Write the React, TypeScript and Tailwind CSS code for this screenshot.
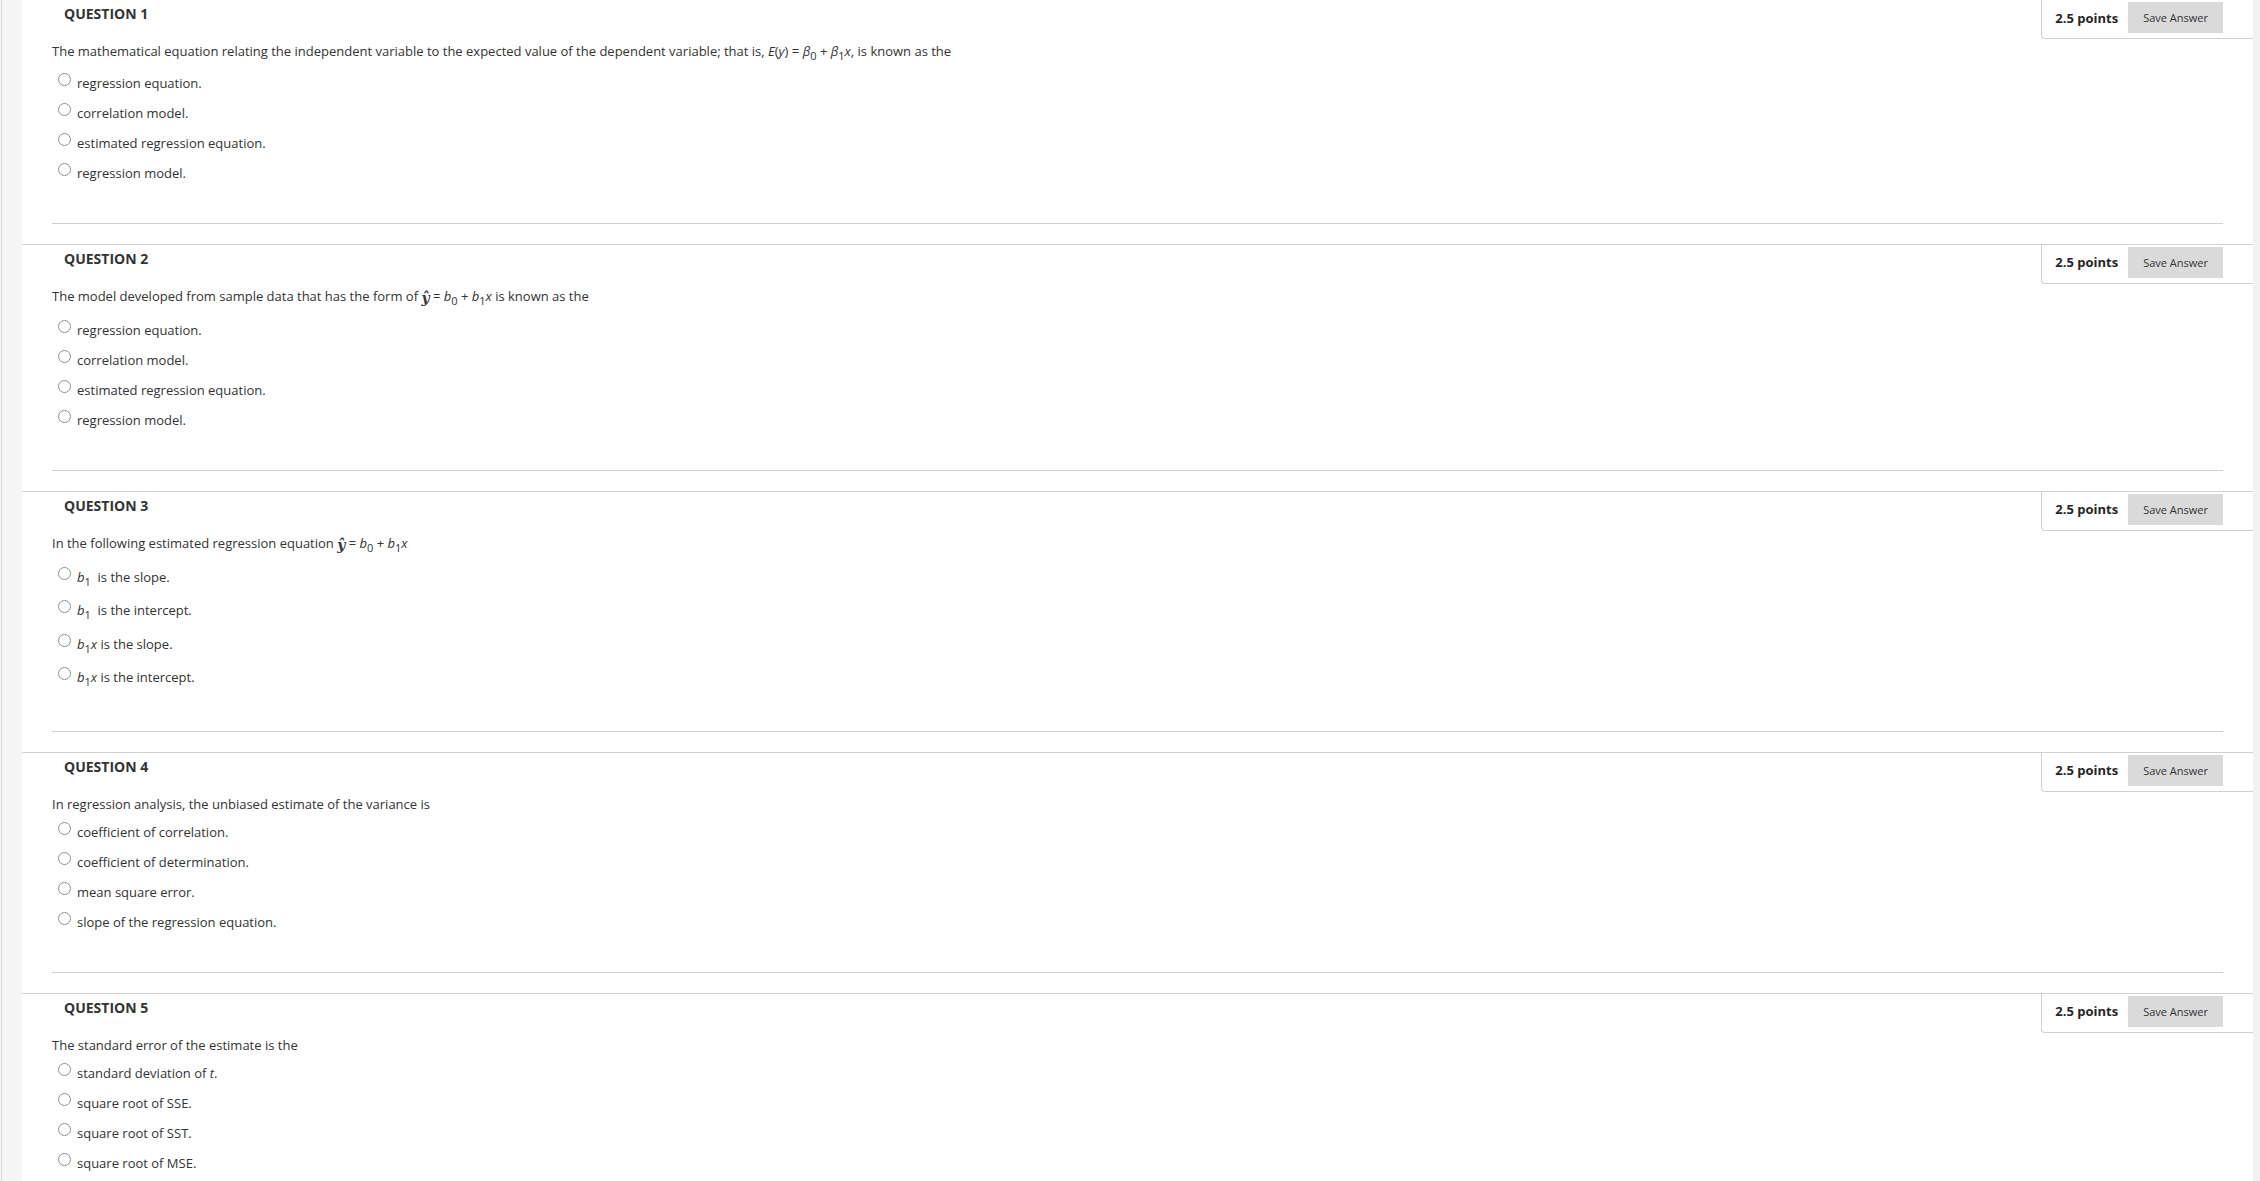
import type { ReactNode } from "react";

type Question = {
  number: number;
  prompt: ReactNode;
  options: ReactNode[];
};

function Sub({ children }: { children: ReactNode }) {
  return <span className="align-sub text-[11px] leading-[16px] not-italic">{children}</span>;
}

// the original shows ŷ as a small, low-sitting inline image
function YHat() {
  return (
    <span className="mb-[6px] inline-block align-[-2px] font-['DejaVu_Serif',serif] text-[14px] font-bold italic leading-none text-[#3a3a3a]">
      ŷ
    </span>
  );
}

function Fitted() {
  return (
    <>
      <YHat /> = <i>b</i>
      <Sub>0</Sub> + <i>b</i>
      <Sub>1</Sub>
      <i>x</i>
    </>
  );
}

const questions: Question[] = [
  {
    number: 1,
    prompt: (
      <>
        The mathematical equation relating the independent variable to the expected value of the
        dependent variable; that is, <i>E</i>(<i>y</i>) = <i>β</i>
        <Sub>0</Sub> + <i>β</i>
        <Sub>1</Sub>
        <i>x</i>, is known as the
      </>
    ),
    options: [
      "regression equation.",
      "correlation model.",
      "estimated regression equation.",
      "regression model.",
    ],
  },
  {
    number: 2,
    prompt: (
      <>
        The model developed from sample data that has the form of <Fitted /> is known as the
      </>
    ),
    options: [
      "regression equation.",
      "correlation model.",
      "estimated regression equation.",
      "regression model.",
    ],
  },
  {
    number: 3,
    prompt: (
      <>
        In the following estimated regression equation <Fitted />
      </>
    ),
    options: [
      <>
        <i>b</i>
        <Sub>1</Sub>&nbsp; is the slope.
      </>,
      <>
        <i>b</i>
        <Sub>1</Sub>&nbsp; is the intercept.
      </>,
      <>
        <i>b</i>
        <Sub>1</Sub>
        <i>x</i> is the slope.
      </>,
      <>
        <i>b</i>
        <Sub>1</Sub>
        <i>x</i> is the intercept.
      </>,
    ],
  },
  {
    number: 4,
    prompt: "In regression analysis, the unbiased estimate of the variance is",
    options: [
      "coefficient of correlation.",
      "coefficient of determination.",
      "mean square error.",
      "slope of the regression equation.",
    ],
  },
  {
    number: 5,
    prompt: "The standard error of the estimate is the",
    options: [
      <>
        standard deviation of <i>t</i>.
      </>,
      "square root of SSE.",
      "square root of SST.",
      "square root of MSE.",
    ],
  },
];

function QuestionBlock({ q }: { q: Question }) {
  return (
    <div className="border-t border-[#d0d0d0]">
      <div className="flex items-start justify-between">
        <h3 className="pl-[42px] pt-[4px] text-[14px] font-bold leading-[20px] text-[#333]">
          QUESTION {q.number}
        </h3>
        <div className="flex items-center gap-[10px] rounded-bl-[4px] border-b border-l border-[#d0d0d0] pb-[5px] pl-[13px] pr-[30px] pt-[2px]">
          <span className="text-[13px] font-bold leading-[18px] text-[#262626]">2.5 points</span>
          <button
            type="button"
            className="h-[31px] bg-[#dadada] px-[15px] text-[11px] leading-none text-[#333]"
          >
            Save Answer
          </button>
        </div>
      </div>

      <p className="mt-[3px] pl-[30px] text-[13px] leading-[18px]">{q.prompt}</p>

      <div className="mt-[9px] pl-[36px] text-[13px]">
        {q.options.map((opt, i) => (
          <label key={i} className="flex items-start gap-[6px] pb-[11px]">
            <span className="h-[13px] w-[13px] shrink-0 rounded-full border border-[#8f8f8f] bg-white" />
            <span className="mt-[1px] leading-[18px]">{opt}</span>
          </label>
        ))}
      </div>

      <div className="mx-[30px] mb-[20px] mt-[30px] h-px bg-[#d0d0d0]" />
    </div>
  );
}

export default function App() {
  return (
    <div className="flex h-screen overflow-hidden bg-white font-['Open_Sans',sans-serif] text-[#333]">
      {/* left rail */}
      <div className="w-[22px] shrink-0 bg-[#f5f5f5] shadow-[inset_1px_0_0_#f5f5f5,inset_2px_0_0_#d9d9d9]" />

      <main className="-mt-px min-w-0 flex-1">
        {questions.map((q) => (
          <QuestionBlock key={q.number} q={q} />
        ))}
      </main>

      {/* scrollbar gutter */}
      <div className="w-[7px] shrink-0 bg-[#f1f1f1]" />
    </div>
  );
}
